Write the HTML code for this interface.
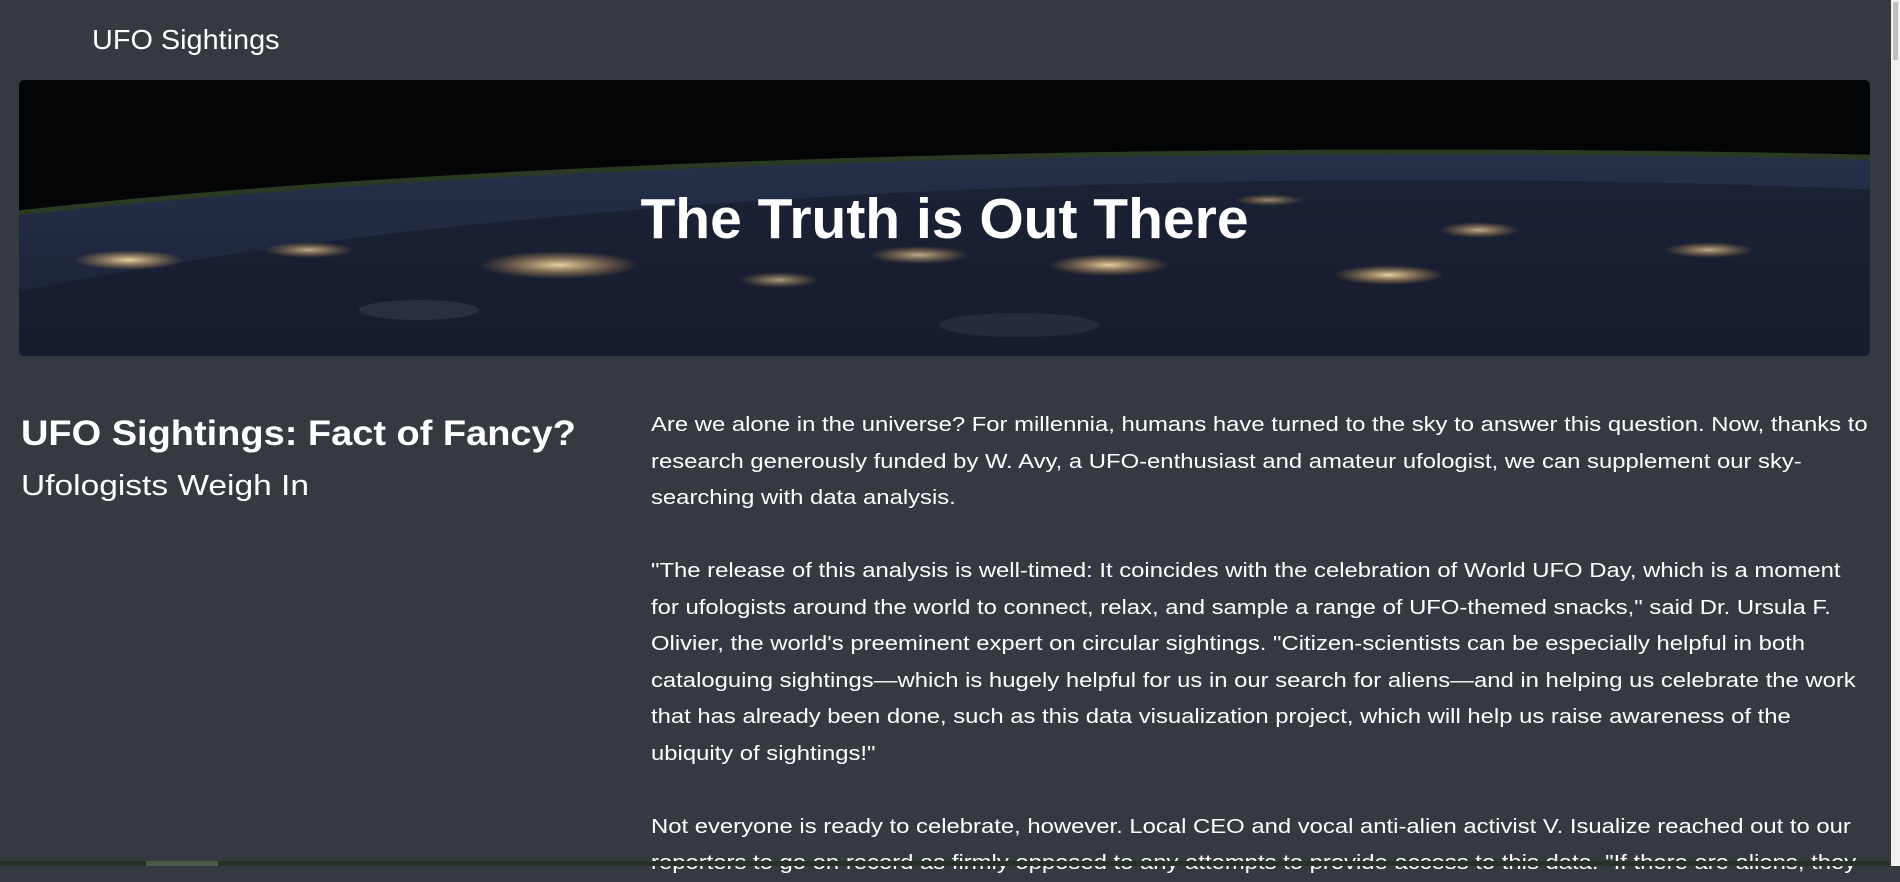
<!DOCTYPE html>
<html><head><meta charset="utf-8"><style>
html,body{margin:0;padding:0;}
body{width:1900px;height:866px;overflow:hidden;background:#343a40;color:#fff;font-family:"Liberation Sans",sans-serif;position:relative;}
.brand{position:absolute;left:92px;top:21px;font-size:28px;line-height:38px;transform:scaleX(1.03);transform-origin:left;}
.hero{position:absolute;left:19px;top:80px;width:1851px;height:276px;border-radius:5px;overflow:hidden;background:#030405;}
.hero svg{position:absolute;left:0;top:0;}
.hero h1{position:absolute;left:0;right:0;top:109px;margin:0;text-align:center;font-size:57px;line-height:60px;font-weight:bold;color:#fff;}
.h2{position:absolute;left:21px;top:410px;font-size:35px;font-weight:bold;line-height:48px;margin:0;white-space:nowrap;transform:scaleX(1.085);transform-origin:left;}
.h3{position:absolute;left:21px;top:466px;font-size:29px;line-height:40px;white-space:nowrap;transform:scaleX(1.155);transform-origin:left;}
.p{position:absolute;left:651px;top:407px;font-size:20.5px;line-height:36.5px;white-space:nowrap;transform:scaleX(1.163);transform-origin:left;}
.sb{position:absolute;right:0;top:0;width:9px;height:866px;background:#f0f0f0;}
.sb i{position:absolute;left:2px;top:2px;width:5px;height:58px;background:#c0c0c0;}
.hb{position:absolute;left:0;bottom:0;width:1891px;height:5px;background:#253225;}
.hb i{position:absolute;left:146px;top:0;width:72px;height:5px;background:#4a5a4a;}
</style></head><body>
<div class="brand">UFO Sightings</div>
<div class="hero">
<svg width="1851" height="276" viewBox="0 0 1851 276">
<defs>
<radialGradient id="l" cx="50%" cy="50%" r="50%"><stop offset="0" stop-color="#ffe6b0" stop-opacity=".9"/><stop offset="1" stop-color="#e0a050" stop-opacity="0"/></radialGradient>
<linearGradient id="e" x1="0" y1="0" x2="0" y2="1"><stop offset="0" stop-color="#26304a"/><stop offset=".5" stop-color="#1b2336"/><stop offset="1" stop-color="#141a28"/></linearGradient>
</defs>
<ellipse cx="1400" cy="236" rx="1800" ry="164" fill="url(#e)" stroke="#2a3a22" stroke-width="5"/>
<ellipse cx="1400" cy="400" rx="1800" ry="300" fill="#151b2a" opacity=".6"/>
<ellipse cx="540" cy="185" rx="80" ry="14" fill="url(#l)"/>
<ellipse cx="110" cy="180" rx="55" ry="10" fill="url(#l)"/>
<ellipse cx="290" cy="170" rx="45" ry="8" fill="url(#l)" opacity=".8"/>
<ellipse cx="900" cy="175" rx="50" ry="9" fill="url(#l)" opacity=".8"/>
<ellipse cx="1090" cy="185" rx="60" ry="11" fill="url(#l)"/>
<ellipse cx="1370" cy="195" rx="55" ry="10" fill="url(#l)"/>
<ellipse cx="1460" cy="150" rx="40" ry="8" fill="url(#l)" opacity=".8"/>
<ellipse cx="1690" cy="170" rx="45" ry="8" fill="url(#l)" opacity=".8"/>
<ellipse cx="760" cy="200" rx="40" ry="8" fill="url(#l)" opacity=".7"/>
<ellipse cx="1250" cy="120" rx="35" ry="6" fill="url(#l)" opacity=".6"/>
<ellipse cx="400" cy="230" rx="60" ry="10" fill="#8a93a8" opacity=".15"/>
<ellipse cx="1000" cy="245" rx="80" ry="12" fill="#8a93a8" opacity=".12"/>
</svg>
<h1>The Truth is Out There</h1></div>
<div class="h2">UFO Sightings: Fact of Fancy?</div>
<div class="h3">Ufologists Weigh In</div>
<div class="p">Are we alone in the universe? For millennia, humans have turned to the sky to answer this question. Now, thanks to<br>research generously funded by W. Avy, a UFO-enthusiast and amateur ufologist, we can supplement our sky-<br>searching with data analysis.<br><br>"The release of this analysis is well-timed: It coincides with the celebration of World UFO Day, which is a moment<br>for ufologists around the world to connect, relax, and sample a range of UFO-themed snacks," said Dr. Ursula F.<br>Olivier, the world's preeminent expert on circular sightings. "Citizen-scientists can be especially helpful in both<br>cataloguing sightings—which is hugely helpful for us in our search for aliens—and in helping us celebrate the work<br>that has already been done, such as this data visualization project, which will help us raise awareness of the<br>ubiquity of sightings!"<br><br>Not everyone is ready to celebrate, however. Local CEO and vocal anti-alien activist V. Isualize reached out to our<br>reporters to go on record as firmly opposed to any attempts to provide access to this data. "If there are aliens, they</div>
<div class="sb"><i></i></div>
<div class="hb"><i></i></div>
</body></html>
